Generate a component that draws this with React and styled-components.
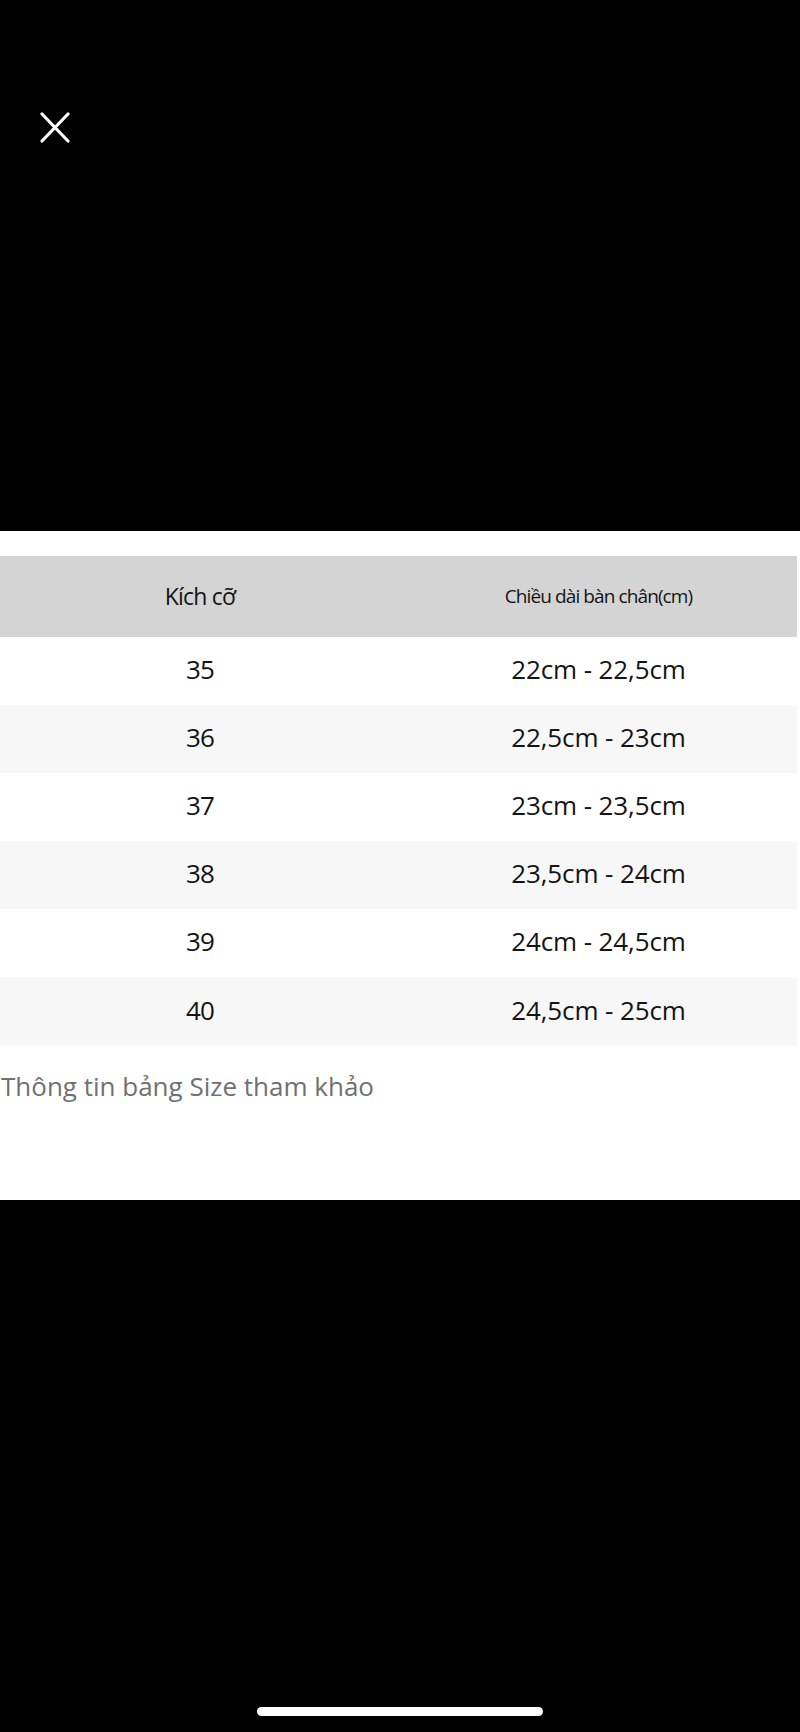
import React from "react";
import styled, { createGlobalStyle } from "styled-components";

const Global = createGlobalStyle`
  html, body { margin: 0; padding: 0; background: #000; }
  body { font-family: "Open Sans", "Noto Sans", sans-serif; }
`;

const Screen = styled.div`
  width: 800px;
  height: 1732px;
  background: #000;
  display: flex;
  flex-direction: column;
`;

const TopBar = styled.div`
  height: 531px;
  padding: 112px 0 0 40px;
  box-sizing: border-box;
`;

const CloseButton = styled.button`
  width: 30px;
  height: 31px;
  padding: 0;
  border: 0;
  background: transparent;
  display: block;
`;

const Sheet = styled.div`
  height: 669px;
  background: #fff;
  padding-top: 25px;
  box-sizing: border-box;
  display: flex;
  flex-direction: column;
`;

const Table = styled.div`
  width: 797px;
  display: flex;
  flex-direction: column;
`;

const Row = styled.div`
  display: grid;
  grid-template-columns: 400px 397px;
  align-items: center;
  box-sizing: border-box;
  padding-bottom: ${(p) => p.$pb || 0}px;
  height: ${(p) => p.$h}px;
  background: ${(p) => p.$bg};
`;

const Cell = styled.div`
  text-align: center;
  color: #141414;
  font-size: ${(p) => p.$size}px;
  letter-spacing: ${(p) => p.$ls || 0}px;
  line-height: 1;
`;

const Note = styled.div`
  margin-top: 24px;
  padding-left: 1px;
  font-size: 26px;
  color: #707070;
  letter-spacing: 0;
  line-height: 32px;
`;

const Bottom = styled.div`
  flex: 1;
  display: flex;
  justify-content: center;
  align-items: flex-end;
  padding-bottom: 16px;
`;

const HomeBar = styled.div`
  width: 286px;
  height: 9px;
  border-radius: 5px;
  background: #fff;
`;

const rows = [
  ["35", "22cm - 22,5cm"],
  ["36", "22,5cm - 23cm"],
  ["37", "23cm - 23,5cm"],
  ["38", "23,5cm - 24cm"],
  ["39", "24cm - 24,5cm"],
  ["40", "24,5cm - 25cm"],
];

export default function App() {
  return (
    <>
      <Global />
      <Screen>
        <TopBar>
          <CloseButton aria-label="close">
            <svg width="30" height="31" viewBox="0 0 30 31">
              <path d="M2 2 L28 29 M28 2 L2 29" stroke="#fff" strokeWidth="3.2" strokeLinecap="round" fill="none" />
            </svg>
          </CloseButton>
        </TopBar>
        <Sheet>
          <Table>
            <Row $h={81} $bg="#d4d4d4">
              <Cell $size={23} $ls={-0.8}>Kích cỡ</Cell>
              <Cell $size={19} $ls={-0.9}>Chiều dài bàn chân(cm)</Cell>
            </Row>
            {rows.map(([a, b], i) => (
              <Row key={a} $h={68.1} $pb={4} $bg={i % 2 === 1 ? "#f7f7f7" : "#fff"}>
                <Cell $size={26} $ls={-0.8}>{a}</Cell>
                <Cell $size={26} $ls={-0.1}>{b}</Cell>
              </Row>
            ))}
          </Table>
          <Note>Thông tin bảng Size tham khảo</Note>
        </Sheet>
        <Bottom>
          <HomeBar />
        </Bottom>
      </Screen>
    </>
  );
}
